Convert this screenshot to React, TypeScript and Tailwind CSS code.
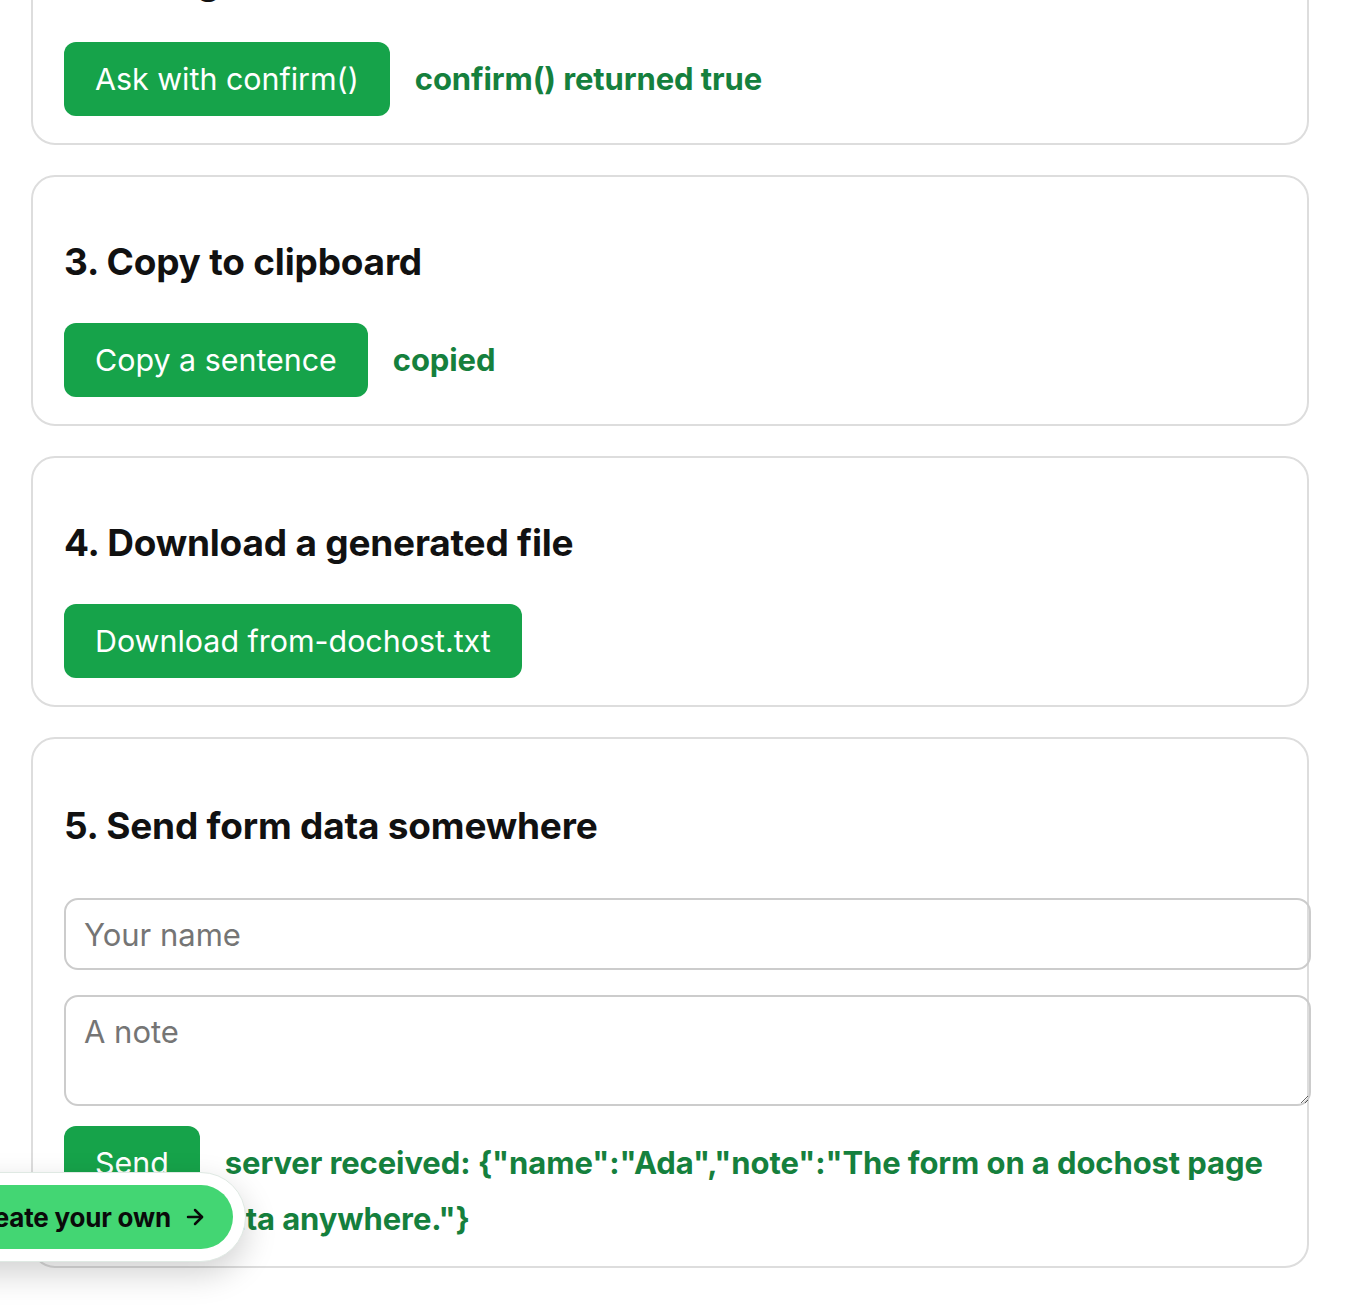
import React from 'react';
import { ArrowRight } from 'lucide-react';

const font = { fontFamily: 'Inter, "Noto Sans", sans-serif' };

function Card({ title, children }: { title: string; children: React.ReactNode }) {
  return (
    <section className="rounded-[24px] border-2 border-[#dddddd] bg-white px-[31px] pt-[30px] pb-[27px]">
      <h2 className="mt-[33px] mb-[39px] text-[37px] leading-[44px] font-bold tracking-[-0.2px] text-[#111111]">{title}</h2>
      {children}
    </section>
  );
}

function GreenButton({ children }: { children: React.ReactNode }) {
  return (
    <button className="inline-block rounded-[12px] bg-[#16a34a] px-[31px] py-[18px] align-baseline text-[30.4px] leading-[38px] text-white">
      {children}
    </button>
  );
}

function Status({ children }: { children: React.ReactNode }) {
  return <span className="ml-[25px] text-[31px] leading-[37px] font-bold tracking-[-0.1px] text-[#15803d]">{children}</span>;
}

export default function App() {
  return (
    <div className="relative h-[1310px] overflow-hidden bg-white" style={font}>
      <div className="-mt-[106px] ml-[31px] flex w-[1278px] flex-col gap-[30px]">
        <Card title="2. Dialogs (alert / confirm)">
          <div>
            <GreenButton>Ask with confirm()</GreenButton>
            <Status>confirm() returned true</Status>
          </div>
        </Card>

        <Card title="3. Copy to clipboard">
          <div>
            <GreenButton>Copy a sentence</GreenButton>
            <Status>copied</Status>
          </div>
        </Card>

        <Card title="4. Download a generated file">
          <div>
            <GreenButton>Download from-dochost.txt</GreenButton>
          </div>
        </Card>

        <section className="rounded-[24px] border-2 border-[#dddddd] bg-white px-[31px] pt-[30px] pb-[29px]">
          <h2 className="mt-[35px] mb-[50px] text-[37px] leading-[44px] font-bold tracking-[-0.2px] text-[#111111]">
            5. Send form data somewhere
          </h2>
          <input
            className="block h-[72px] w-[1247px] rounded-[14px] border-2 border-[#cccccc] px-[18px] text-[31px] text-[#111111] outline-none placeholder:text-[#757575]"
            placeholder="Your name"
          />
          <textarea
            className="mt-[25px] block h-[111px] w-[1247px] resize-y rounded-[14px] border-2 border-[#cccccc] px-[18px] py-[16px] text-[31px] leading-[38px] text-[#111111] outline-none placeholder:text-[#757575]"
            placeholder="A note"
          />
          <div className="mt-[20px]">
            <GreenButton>Send</GreenButton>
            <Status>
              server received: {'{"name":"Ada","note":"The form on a dochost page can send data anywhere."}'}
            </Status>
          </div>
        </section>
      </div>

      <div className="absolute bottom-[48px] left-[-76px] rounded-full border border-[#dfe9e3] bg-white p-[12px] shadow-[0_12px_32px_rgba(0,0,0,0.18)]">
        <a className="flex h-[64px] items-center gap-[12px] rounded-full bg-[#43d673] pl-[28px] pr-[26px] text-[26px] font-bold tracking-[-0.2px] text-[#0a0a0a]">
          Create your own
          <ArrowRight size={24} strokeWidth={2.5} />
        </a>
      </div>
    </div>
  );
}
